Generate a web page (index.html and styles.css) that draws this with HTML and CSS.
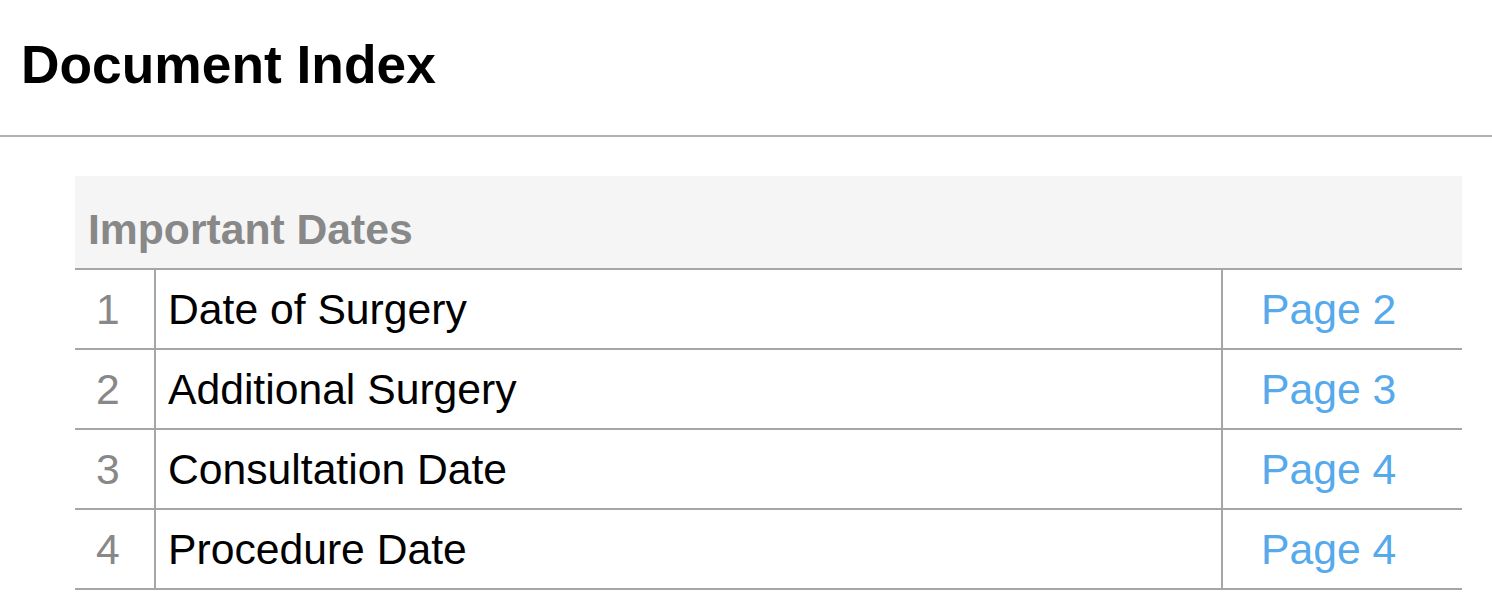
FILE: index.html
```html
<!DOCTYPE html>
<html>
<head>
<meta charset="utf-8">
<link rel="stylesheet" href="styles.css">
</head>
<body>
<header class="top">
  <h1 class="title">Document Index</h1>
</header>
<main class="content">
  <section class="index">
    <div class="index-head">Important Dates</div>
    <div class="row">
      <div class="cell num">1</div>
      <div class="cell name">Date of Surgery</div>
      <div class="cell page">Page 2</div>
    </div>
    <div class="row">
      <div class="cell num">2</div>
      <div class="cell name">Additional Surgery</div>
      <div class="cell page">Page 3</div>
    </div>
    <div class="row">
      <div class="cell num">3</div>
      <div class="cell name">Consultation Date</div>
      <div class="cell page">Page 4</div>
    </div>
    <div class="row">
      <div class="cell num">4</div>
      <div class="cell name">Procedure Date</div>
      <div class="cell page">Page 4</div>
    </div>
  </section>
</main>
</body>
</html>
```
FILE: styles.css
```css
html, body {
  margin: 0;
  padding: 0;
  background: #ffffff;
}
body {
  font-family: "Liberation Sans", Arial, Helvetica, sans-serif;
  color: #000;
}
.top {
  padding: 33px 21px 38px;
  border-bottom: 2px solid #b0b0b0;
}
.title {
  margin: 0;
  font-size: 53.33px;
  line-height: 64px;
  font-weight: bold;
}
.content {
  padding: 39px 30px 0 75px;
}
.index {
  display: flex;
  flex-direction: column;
}
.index-head {
  background: #f5f5f5;
  color: #888888;
  font-weight: bold;
  font-size: 42.67px;
  line-height: 52px;
  padding: 27px 13px 13px;
  border-bottom: 2px solid #a6a6a6;
}
.row {
  display: flex;
  border-bottom: 2px solid #a6a6a6;
  font-size: 42.67px;
  line-height: 78px;
}
.cell {
  white-space: nowrap;
}
.num {
  width: 81px;
  box-sizing: border-box;
  padding-left: 21px;
  color: #888888;
  border-right: 2px solid #a6a6a6;
}
.name {
  flex: 1;
  padding-left: 12px;
  border-right: 2px solid #a6a6a6;
}
.page {
  width: 239px;
  box-sizing: border-box;
  padding-left: 38px;
  color: #56a9ea;
}
```
